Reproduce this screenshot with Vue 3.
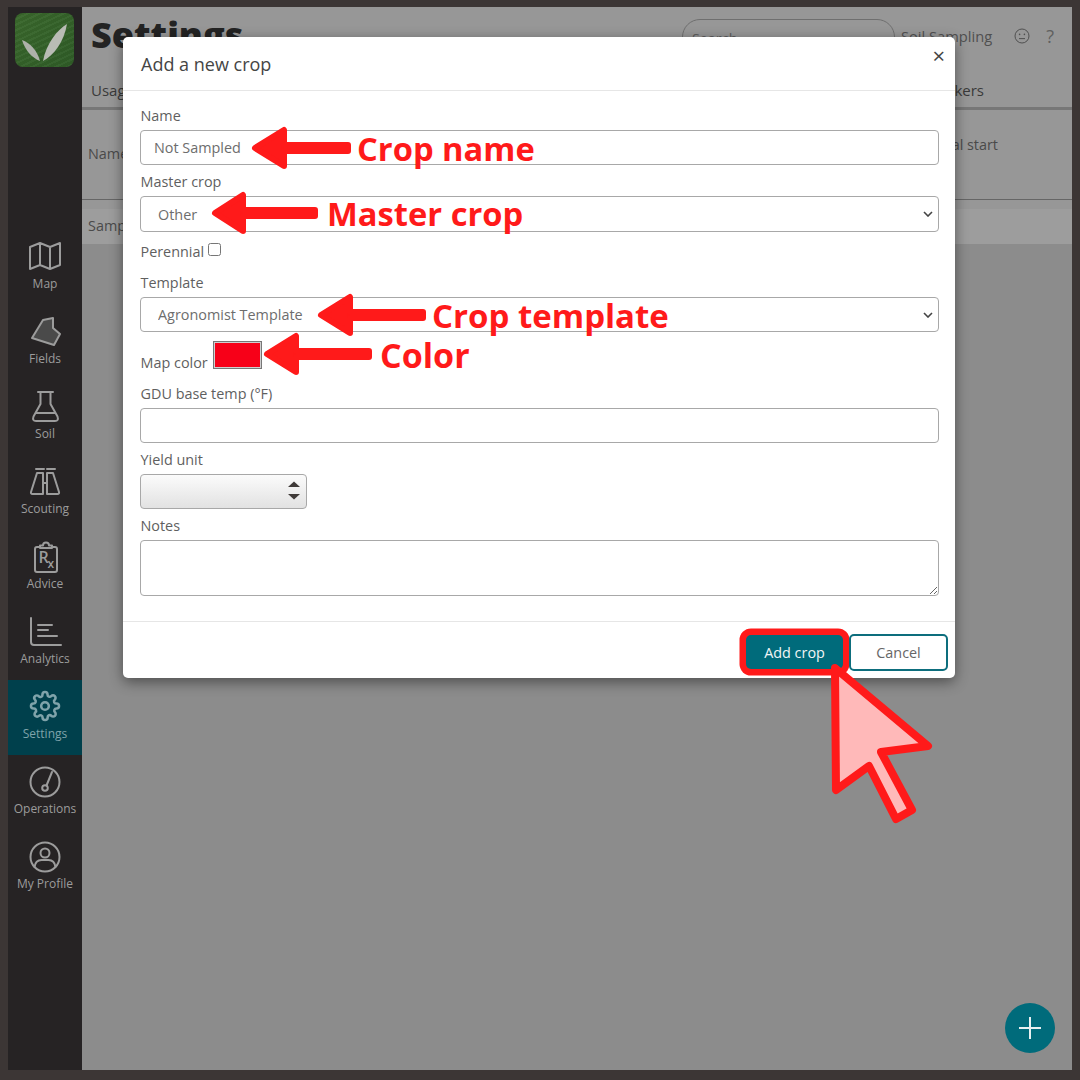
<template>
  <div class="frame">
    <div class="app">
      <aside class="sidebar">
        <div class="logo">
          <svg viewBox="0 0 59 54" width="59" height="54">
            <path d="M7 27 C15 30 22 37 25 48 C17 45 10 37 7 27Z" fill="#aeb1aa" />
            <path d="M52 11 C42 17 31 31 28 48 C39 42 49 29 52 11Z" fill="#b9bcb5" />
          </svg>
        </div>
        <nav class="nav">
          <div v-for="item in navItems" :key="item.label" class="nav-item" :class="{ active: item.active }">
            <svg class="nav-icon" viewBox="0 0 36 36" width="36" height="36" v-html="item.icon"></svg>
            <span>{{ item.label }}</span>
          </div>
        </nav>
      </aside>

      <main class="page">
        <header class="topbar">
          <h1>Settings</h1>
          <div class="search">Search</div>
          <span class="account">Soil Sampling</span>
          <svg class="smiley" viewBox="0 0 16 16" width="16" height="16">
            <circle cx="8" cy="8" r="7" />
            <circle cx="5.6" cy="6.4" r=".8" class="dot" />
            <circle cx="10.4" cy="6.4" r=".8" class="dot" />
            <path d="M5 10.6h6" />
          </svg>
          <span class="help">?</span>
        </header>
        <div class="tabs">
          <span>Usage</span>
          <span>Markers</span>
        </div>
        <div class="table-head">
          <span class="name-col">Name</span>
          <span>Seasonal start</span>
        </div>
        <div class="table-row">Sampled</div>
      </main>

      <button class="fab" type="button">
        <svg viewBox="0 0 22 22" width="22" height="22"><path d="M0 11h22M11 0v22" /></svg>
      </button>

      <section class="modal">
        <div class="modal-header">
          <h2>Add a new crop</h2>
          <span class="close">×</span>
        </div>
        <form class="modal-body" @submit.prevent>
          <label class="label">Name</label>
          <input class="control h35" type="text" value="Not Sampled" />

          <label class="label">Master crop</label>
          <div class="select-wrap h36">
            <select class="control full"><option>Other</option></select>
            <svg class="chevron" viewBox="0 0 10 6" width="10" height="6"><path d="M1 1l4 4 4-4" /></svg>
          </div>

          <div class="check-row">
            <span>Perennial</span>
            <input type="checkbox" />
          </div>

          <label class="label">Template</label>
          <div class="select-wrap h35">
            <select class="control full"><option>Agronomist Template</option></select>
            <svg class="chevron" viewBox="0 0 10 6" width="10" height="6"><path d="M1 1l4 4 4-4" /></svg>
          </div>

          <div class="color-row">
            <span>Map color</span>
            <div class="swatch"></div>
          </div>

          <label class="label">GDU base temp (°F)</label>
          <input class="control h35" type="text" />

          <label class="label">Yield unit</label>
          <div class="stepper">
            <svg viewBox="0 0 12 22" width="12" height="22">
              <path d="M0 7l6-5.500L12 7z" />
              <path d="M0 14l6 5.500L12 14z" />
            </svg>
          </div>

          <label class="label">Notes</label>
          <textarea class="control notes"></textarea>
        </form>
        <div class="modal-footer">
          <button class="btn primary" type="button">Add crop</button>
          <button class="btn secondary" type="button">Cancel</button>
        </div>
      </section>
    </div>

    <!-- tutorial annotations drawn on top of the screenshot -->
    <svg class="arrows" viewBox="0 0 1080 1080" width="1080" height="1080">
      <g v-for="arrow in arrows" :key="arrow.y" fill="#ff1a1a" stroke="#ff1a1a" stroke-width="6" stroke-linejoin="round">
        <polygon :points="arrowPoints(arrow)" />
      </g>
      <polygon
        points="835,668 928,746 881,752 912,810 896,819 869,766 836,790"
        fill="#ffb9b9"
        stroke="#ff1a1a"
        stroke-width="8"
        stroke-linejoin="round"
      />
    </svg>
    <span class="note n1">Crop name</span>
    <span class="note n2">Master crop</span>
    <span class="note n3">Crop template</span>
    <span class="note n4">Color</span>
  </div>
</template>

<script setup>
const navItems = [
  {
    label: "Map",
    icon: '<path d="M3 9l10-4 10 4 10-4v22l-10 4-10-4-10 4z M13 5v22 M23 9v22" />',
  },
  {
    label: "Fields",
    icon: '<path class="solid" d="M5 25L16 7l10-2v10l7 6-6 11z" />',
  },
  {
    label: "Soil",
    icon: '<path d="M11 4h15M13.500 4v12L6.500 28.500Q5 33 9 33h19q4 0 2.500-4.500L23.500 16V4M9 25h19" />',
  },
  {
    label: "Scouting",
    icon: '<path d="M9 6h8M20 6h8M10 10h6v21H5.500q-2 0-1.500-2zM26 10h-6v21h10.500q2 0 1.500-2zM16 20h4" />',
  },
  {
    label: "Advice",
    icon: '<path d="M13 9H10q-2 0-2 2v21q0 2 2 2h18q2 0 2-2V11q0-2-2-2h-3M13 10V7.500h3a3 3 0 0 1 6 0h3V10z" /><text x="11.500" y="25" class="rx">R</text><text x="20.500" y="30" class="rx small">x</text>',
  },
  {
    label: "Analytics",
    icon: '<path d="M4 5v24q0 3 3 3h27M11 12h14M11 17h10M11 23h19" />',
  },
  {
    label: "Settings",
    active: true,
    icon: '<g transform="translate(2.700 2.700) scale(1.275)"><circle cx="12" cy="12" r="3" /><path d="M19.400 15a1.650 1.650 0 0 0 .33 1.820l.06.06a2 2 0 1 1-2.830 2.830l-.06-.06a1.650 1.650 0 0 0-2.820 1.170V21a2 2 0 1 1-4 0v-.09A1.650 1.650 0 0 0 7.280 19.740l-.06.06a2 2 0 1 1-2.830-2.830l.06-.06A1.650 1.650 0 0 0 3.280 14H3a2 2 0 1 1 0-4h.09A1.650 1.650 0 0 0 4.260 7.180l-.06-.06a2 2 0 1 1 2.830-2.830l.06.06A1.650 1.650 0 0 0 10 3.280V3a2 2 0 1 1 4 0v.09a1.650 1.650 0 0 0 2.820 1.170l.06-.06a2 2 0 1 1 2.830 2.830l-.06.06A1.650 1.650 0 0 0 20.910 10H21a2 2 0 1 1 0 4h-.09a1.650 1.650 0 0 0-1.510 1z" /></g>',
  },
  {
    label: "Operations",
    icon: '<circle cx="18" cy="19" r="14.500" /><circle cx="18" cy="25" r="2.800" /><path d="M19.500 22.500L25 9" />',
  },
  {
    label: "My Profile",
    icon: '<circle cx="18" cy="19" r="14.500" /><circle cx="18" cy="15" r="4.500" /><path d="M7.500 29q1-7 7-7h7q6 0 7 7" />',
  },
];

const arrows = [
  { tip: 255, back: 284, end: 348, y: 148 },
  { tip: 215, back: 243, end: 315, y: 213 },
  { tip: 321, back: 350, end: 423, y: 315 },
  { tip: 267, back: 296, end: 369, y: 354 },
];

const arrowPoints = ({ tip, back, end, y }) =>
  [
    [tip, y],
    [back, y - 18],
    [back, y - 3],
    [end, y - 3],
    [end, y + 3],
    [back, y + 3],
    [back, y + 18],
  ]
    .map((p) => p.join(","))
    .join(" ");
</script>

<style>
html,
body {
  margin: 0;
  background: #3c3635;
}
</style>

<style scoped>
.frame {
  position: relative;
  width: 1080px;
  height: 1080px;
  box-sizing: border-box;
  padding: 7px 8px 10px;
  background: #3c3635;
  font-family: "Open Sans", "Liberation Sans", sans-serif;
  overflow: hidden;
}
.app {
  position: relative;
  display: flex;
  height: 100%;
}

/* sidebar */
.sidebar {
  width: 74px;
  flex-shrink: 0;
  background: #262324;
}
.logo {
  width: 59px;
  height: 54px;
  margin: 6px 0 0 7px;
  border-radius: 8px;
  background:
    repeating-linear-gradient(155deg, rgba(255, 255, 255, 0.03) 0 2px, rgba(0, 0, 0, 0.04) 2px 5px),
    linear-gradient(135deg, #3a682c, #2f5c27);
}
.logo svg {
  display: block;
}
.nav {
  margin-top: 163px;
}
.nav-item {
  height: 75px;
  box-sizing: border-box;
  padding-top: 8px;
  display: flex;
  flex-direction: column;
  align-items: center;
  color: #9c9c9c;
  font-size: 12px;
  font-weight: 500;
  line-height: 16px;
}
.nav-item span {
  margin-top: 2px;
}
.nav-item.active {
  background: #00404c;
  color: #7fa3aa;
}
.nav-icon {
  fill: none;
  stroke: currentColor;
  stroke-width: 2;
  stroke-linecap: round;
  stroke-linejoin: round;
}
.nav-icon :deep(.solid) {
  fill: #4a4a4a;
}
.nav-icon :deep(.rx) {
  fill: currentColor;
  stroke: none;
  font-size: 16px;
  font-weight: 600;
}
.nav-icon :deep(.small) {
  font-size: 12px;
}

/* page behind the dialog */
.page {
  flex: 1;
  background: #8c8c8c;
  color: #4a4a4a;
  font-size: 14.4px;
}
.topbar {
  height: 55px;
  box-sizing: border-box;
  padding: 0 18px 0 9px;
  display: flex;
  align-items: center;
  background: #979797;
}
.topbar h1 {
  margin: 0;
  font-size: 36px;
  font-weight: 800;
  color: #232323;
}
.search {
  width: 213px;
  height: 36px;
  box-sizing: border-box;
  margin: 4px 6px 0 auto;
  padding: 10px 9px;
  border: 1.500px solid #6f6f6f;
  border-radius: 18px;
  color: #5d5d5d;
  line-height: 18px;
}
.account {
  font-size: 14.7px;
  color: #505050;
  margin-top: 3px;
}
.smiley {
  margin: 3px 0 0 22px;
  fill: none;
  stroke: #505050;
  stroke-width: 1;
}
.smiley .dot {
  fill: #505050;
  stroke: none;
}
.help {
  margin: 3px 0 0 16px;
  font-size: 18px;
  color: #606060;
}
.tabs {
  height: 48px;
  box-sizing: border-box;
  padding: 18px 88px 0 9px;
  display: flex;
  justify-content: space-between;
  background: #979797;
  border-bottom: 3px solid #777;
  font-size: 15px;
  font-weight: 500;
  color: #3a3a3a;
}
.table-head {
  height: 90px;
  box-sizing: border-box;
  padding: 25px 74px 0 6px;
  display: flex;
  align-items: flex-start;
  justify-content: space-between;
  background: #979797;
  border-bottom: 1px solid #666;
}
.name-col {
  margin-top: 9px;
}
.table-row {
  height: 35px;
  box-sizing: border-box;
  margin-top: 9px;
  padding: 7px 6px;
  background: #9d9d9d;
  box-shadow: 0 -9px 0 #979797;
}

/* dialog */
.modal {
  position: absolute;
  left: 115px;
  top: 30px;
  width: 832px;
  background: #fff;
  border-radius: 5px;
  box-shadow: 0 4px 14px rgba(0, 0, 0, 0.45);
  color: #5f5f5f;
  font-size: 14.4px;
}
.modal-header {
  height: 54px;
  box-sizing: border-box;
  padding: 0 17px 0 18px;
  display: flex;
  align-items: center;
  justify-content: space-between;
  border-bottom: 1px solid #e6e6e6;
}
.modal-header h2 {
  margin: 0;
  font-size: 18px;
  font-weight: 500;
  color: #454545;
}
.close {
  font-size: 22px;
  line-height: 22px;
  color: #444;
  margin: -17px -7px 0 0;
}
.modal-body {
  display: block;
  padding: 14px 16px 25px 17px;
}
.label {
  display: block;
  height: 22px;
  padding-left: 0.500px;
  line-height: 22px;
  margin-bottom: 3px;
}
.control {
  display: block;
  width: 100%;
  box-sizing: border-box;
  padding: 0 13px;
  margin: 0 0 6px;
  border: 1.300px solid #a8a8a8;
  border-radius: 4px;
  background: #fff;
  font-family: inherit;
  font-size: 14.4px;
  color: #6d6d6d;
  outline: none;
}
.h35 {
  height: 35px;
}
.h36 {
  height: 36px;
}
.select-wrap {
  position: relative;
  margin-bottom: 6px;
}
.select-wrap select {
  height: 100%;
  padding-left: 17px;
  appearance: none;
}
.chevron {
  position: absolute;
  right: 6px;
  top: 50%;
  margin-top: -3px;
  fill: none;
  stroke: #444;
  stroke-width: 1.600;
}
.check-row {
  height: 28px;
  margin-bottom: 6px;
  padding: 3px 0 0 0.500px;
  box-sizing: border-box;
  display: flex;
  align-items: flex-start;
  line-height: 22px;
}
.check-row input {
  width: 13px;
  height: 13px;
  margin: 2px 0 0 4px;
}
.color-row {
  height: 39px;
  margin-bottom: 6px;
  padding-left: 0.500px;
  display: flex;
  align-items: flex-start;
  line-height: 22px;
}
.color-row span {
  margin-top: 14px;
}
.swatch {
  width: 49px;
  height: 28px;
  box-sizing: border-box;
  margin: 3px 0 0 5px;
  border: 1px solid #777;
  outline: 1px solid #cfcfcf;
  outline-offset: -2px;
  background: #f70018;
}
.stepper {
  width: 167px;
  height: 35px;
  box-sizing: border-box;
  margin-bottom: 6px;
  padding: 5px 6px 0 0;
  display: flex;
  justify-content: flex-end;
  border: 1.300px solid #a8a8a8;
  border-radius: 4px;
  background: linear-gradient(#fbfbfb, #e2e2e2);
  fill: #3f3a38;
}
.notes {
  height: 56px;
  margin: 0;
  resize: vertical;
}
.modal-footer {
  height: 57px;
  box-sizing: border-box;
  padding: 12px 7px 0 0;
  display: flex;
  justify-content: flex-end;
  gap: 6px;
  border-top: 1px solid #e6e6e6;
}
.btn {
  font-family: inherit;
  font-size: 14.4px;
  border-radius: 5px;
}
.primary {
  width: 97px;
  height: 34px;
  margin-top: 1px;
  border: 0;
  background: #006b7b;
  color: #f0f5f6;
  font-weight: 500;
  box-shadow: 0 0 0 6.500px #ff1a1a;
}
.secondary {
  width: 99px;
  height: 37px;
  border: 2px solid #0d6e7d;
  background: #fff;
  color: #666;
}

/* floating add button */
.fab {
  position: absolute;
  right: 17px;
  bottom: 17px;
  width: 50px;
  height: 50px;
  padding: 0;
  border: 0;
  border-radius: 50%;
  background: #006b7b;
  display: flex;
  align-items: center;
  justify-content: center;
}
.fab path {
  stroke: #e8f0f1;
  stroke-width: 2;
}

/* annotations */
.arrows {
  position: absolute;
  left: 0;
  top: 0;
}
.note {
  position: absolute;
  color: #ff1a1a;
  font-size: 32.700px;
  font-weight: 700;
  line-height: 40px;
  white-space: nowrap;
}
.n1 {
  left: 357px;
  top: 129px;
}
.n2 {
  left: 327px;
  top: 194px;
}
.n3 {
  left: 432px;
  top: 296px;
  font-size: 33px;
}
.n4 {
  left: 380px;
  top: 335px;
  font-size: 34px;
}
</style>
